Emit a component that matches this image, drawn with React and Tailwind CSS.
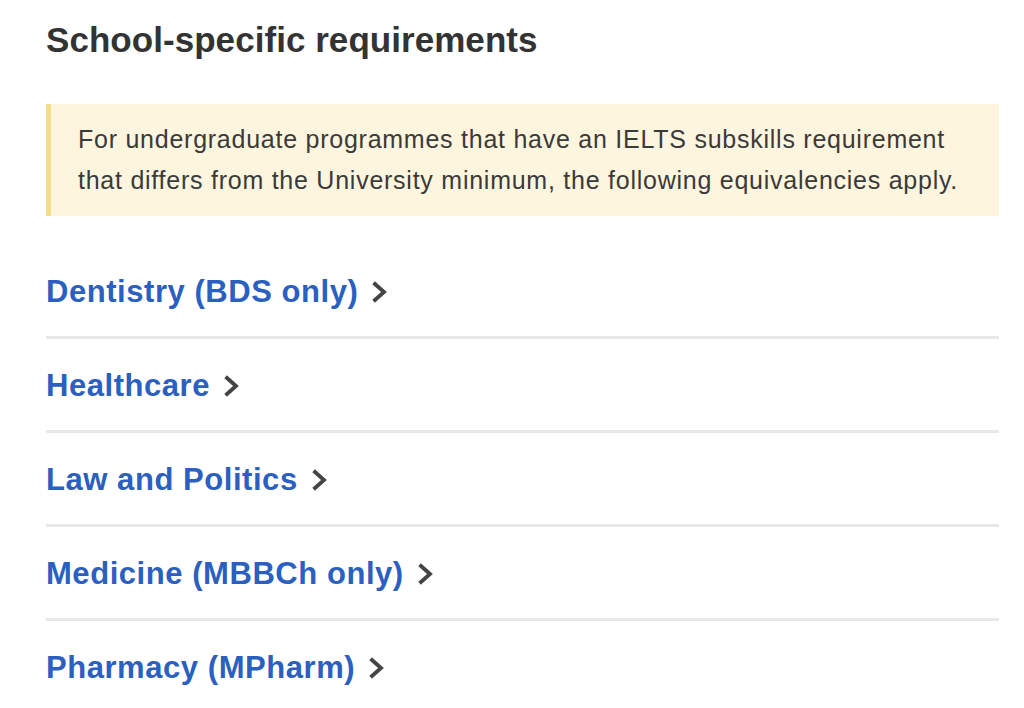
import React from "react";

const items = [
  "Dentistry (BDS only)",
  "Healthcare",
  "Law and Politics",
  "Medicine (MBBCh only)",
  "Pharmacy (MPharm)",
];

function Chevron() {
  return (
    <svg width="16" height="22" viewBox="0 0 16 22" className="ml-[14px] shrink-0">
      <path d="M3 3 L12 11 L3 19" fill="none" stroke="#444444" strokeWidth="3.8" strokeLinecap="square" strokeLinejoin="miter" />
    </svg>
  );
}

export default function App() {
  return (
    <div
      className="w-[1024px] h-[708px] overflow-hidden bg-white pl-[46px] pr-[25px]"
      style={{ fontFamily: '"Liberation Sans", Arial, sans-serif' }}
    >
      <h2 className="pt-[20px] text-[35px] leading-[40px] font-bold text-[#333333] tracking-[0.05px]">
        School-specific requirements
      </h2>
      <div className="mt-[44px] border-l-[5px] border-[#f5dd8c] bg-[#fdf5dd] pl-[27px] pr-[20px] py-[15px]">
        <p className="text-[25px] leading-[41px] text-[#3a3a3a] tracking-[0.75px] whitespace-nowrap">
          For undergraduate programmes that have an IELTS subskills requirement
          <br />
          that differs from the University minimum, the following equivalencies apply.
        </p>
      </div>
      <ul className="mt-[29px]">
        {items.map((t) => (
          <li key={t} className="border-b-[3px] border-[#e8e8e8] pt-[29px] pb-[26px]">
            <a className="flex items-center text-[31px] leading-[36px] font-bold text-[#2b5fc0] tracking-[0.55px]">
              <span>{t}</span>
              <Chevron />
            </a>
          </li>
        ))}
      </ul>
    </div>
  );
}
